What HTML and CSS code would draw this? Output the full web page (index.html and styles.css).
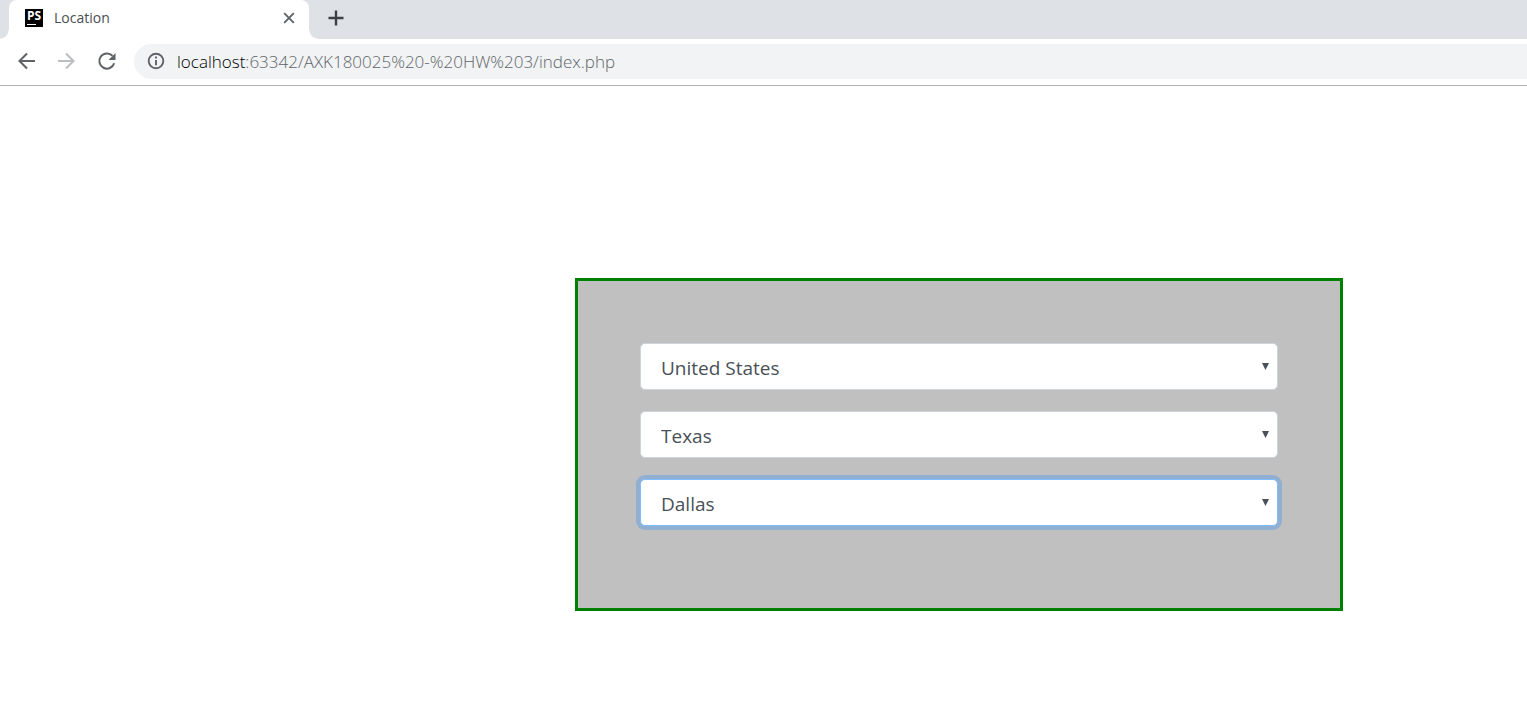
FILE: index.html
```html
<!DOCTYPE html>
<html lang="en">
<head>
<meta charset="utf-8">
<title>Location</title>
<link rel="stylesheet" href="styles.css">
</head>
<body>
<header class="browser">
  <div class="tab-strip">
    <div class="tab">
      <span class="favicon">PS</span>
      <span class="tab-title">Location</span>
      <button class="icon-button tab-close" type="button" aria-label="Close tab">
        <svg width="12" height="12" viewBox="0 0 12 12"><path d="M1.200 1.200l9.600 9.600M10.800 1.200L1.200 10.800" fill="none" stroke="#5f6368" stroke-width="1.900"/></svg>
      </button>
    </div>
    <button class="icon-button new-tab" type="button" aria-label="New tab">
      <svg width="16" height="16" viewBox="0 0 16 16"><path d="M8 .5v15M.5 8h15" fill="none" stroke="#3c4043" stroke-width="2.400"/></svg>
    </button>
  </div>
  <div class="toolbar">
    <button class="icon-button" type="button" aria-label="Back">
      <svg width="20" height="20" viewBox="0 0 20 20"><path d="M18 10H3M10 2.500L2.500 10l7.500 7.500" fill="none" stroke="#5f6368" stroke-width="2.100"/></svg>
    </button>
    <button class="icon-button" type="button" aria-label="Forward">
      <svg width="20" height="20" viewBox="0 0 20 20"><path d="M1 10h15M9 2.500l7.500 7.500-7.500 7.500" fill="none" stroke="#bcbec1" stroke-width="2.100"/></svg>
    </button>
    <button class="icon-button" type="button" aria-label="Reload">
      <svg width="20" height="20" viewBox="0 0 20 20"><path d="M15.500 4.800A7.600 7.600 0 1 0 17.200 12.300" fill="none" stroke="#5f6368" stroke-width="2"/><path d="M18.500 2v7h-7z" fill="#5f6368"/></svg>
    </button>
    <div class="address">
      <svg class="info" width="18" height="18" viewBox="0 0 18 18"><circle cx="9" cy="9" r="7.300" fill="none" stroke="#5f6368" stroke-width="1.900"/><path d="M9 4.600v2M9 8v5.200" stroke="#5f6368" stroke-width="1.900"/></svg>
      <a class="url" href="#"><span class="host">localhost</span>:63342/AXK180025%20-%20HW%203/index.php</a>
    </div>
  </div>
</header>
<main class="page">
  <form class="panel">
    <div class="field">
      <select class="choice" aria-label="Country"><option>United States</option></select>
    </div>
    <div class="field">
      <select class="choice" aria-label="State"><option>Texas</option></select>
    </div>
    <div class="field">
      <select class="choice choice-active" aria-label="City"><option>Dallas</option></select>
    </div>
  </form>
</main>
</body>
</html>
```

FILE: styles.css
```css
* {
  box-sizing: border-box;
}

body {
  margin: 0;
  background: #fff;
  font-family: "Open Sans", "Noto Sans", sans-serif;
}

.icon-button {
  display: flex;
  align-items: center;
  justify-content: center;
  width: 20px;
  height: 20px;
  padding: 0;
  border: 0;
  background: none;
}

.tab-strip {
  display: flex;
  align-items: center;
  gap: 17px;
  height: 39px;
  padding-left: 9px;
  background: #dee1e6;
}

.tab {
  position: relative;
  display: flex;
  align-items: center;
  width: 300px;
  height: 39px;
  padding: 0 10px 4px 16px;
  border-radius: 8px 8px 0 0;
  background: #fff;
}

.tab::before,
.tab::after {
  content: "";
  position: absolute;
  bottom: 0;
  width: 9px;
  height: 9px;
}

.tab::before {
  right: 100%;
  background: radial-gradient(circle at 0 0, #dee1e6 8px, #fff 9px);
}

.tab::after {
  left: 100%;
  background: radial-gradient(circle at 100% 0, #dee1e6 8px, #fff 9px);
}

.favicon {
  position: relative;
  width: 18px;
  height: 18px;
  background: #000;
  color: #fff;
  font: bold 12px/14px "Open Sans", sans-serif;
  text-align: center;
}

.favicon::after {
  content: "";
  position: absolute;
  left: 2px;
  bottom: 2px;
  width: 9px;
  height: 1px;
  background: #fff;
}

.tab-title {
  flex: 1;
  margin-left: 11px;
  color: #4a4e51;
  font-size: 14px;
}

.new-tab {
  margin-bottom: 3px;
}

.toolbar {
  display: flex;
  align-items: center;
  gap: 20px;
  height: 47px;
  padding: 0 0 2px 17px;
  border-bottom: 1px solid #b1b1b3;
}

.address {
  display: flex;
  flex: 1;
  align-items: center;
  gap: 12px;
  height: 35px;
  margin-left: -3px;
  padding-left: 13px;
  border-radius: 18px 0 0 18px;
  background: #f1f3f4;
}

.url {
  color: #5f6569;
  font-size: 17px;
  font-weight: 300;
  text-decoration: none;
}

.host {
  color: #000;
}

.page {
  display: grid;
  grid-template-columns: 575fr 768fr 184fr;
  padding: 192px 0 104px;
}

.panel {
  grid-column: 2;
  display: flex;
  flex-direction: column;
  gap: 21px;
  padding: 62px 62px 82px;
  border: 3px solid #008000;
  background: #c0c0c0;
}

.field {
  position: relative;
}

.field::after {
  content: "";
  position: absolute;
  top: 20px;
  right: 9px;
  width: 7px;
  height: 7px;
  background: #495057;
  clip-path: polygon(0 0, 100% 0, 50% 100%);
  pointer-events: none;
}

.choice {
  display: block;
  width: 100%;
  height: 47px;
  padding: 2px 20px 0;
  border: 1px solid #ced4da;
  border-radius: 5px;
  appearance: none;
  background: #fff;
  color: #495057;
  font-family: inherit;
  font-size: 19px;
}

.choice-active {
  border-color: #80bdff;
  box-shadow: 0 0 0 4px #90afd1;
}
```
